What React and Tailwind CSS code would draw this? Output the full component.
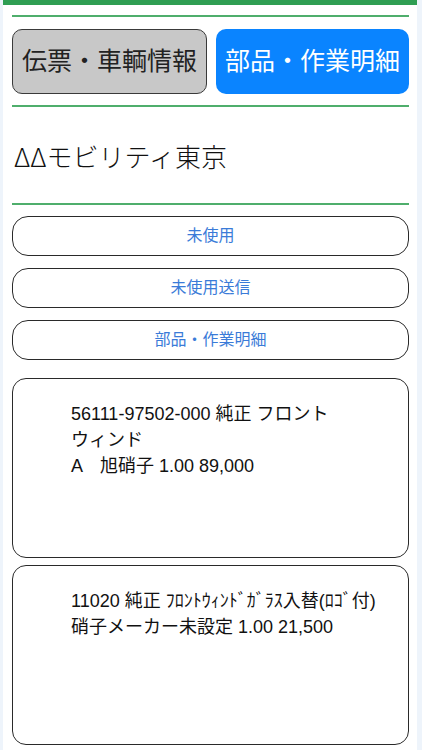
import React from 'react';

const font = { fontFamily: '"Liberation Sans", "Noto Sans CJK JP", sans-serif' };

const menuButtons = ['未使用', '未使用送信', '部品・作業明細'];

const items = [
  ['56111-97502-000 純正 フロント', 'ウィンド', 'A　旭硝子 1.00 89,000'],
  ['11020 純正 ﾌﾛﾝﾄｳｨﾝﾄﾞｶﾞﾗｽ入替(ﾛｺﾞ付)', '硝子メーカー未設定 1.00 21,500'],
];

const Divider = ({ className = '' }) => (
  <div className={`h-[2px] bg-[#4fae6c] ${className}`} />
);

export default function App() {
  return (
    <div className="w-full h-[750px] bg-[#eef4fb] overflow-hidden" style={font}>
      <div className="ml-[3px] mr-[5px] h-full bg-white">
        <div className="h-[5px] bg-[#2f9e53]" />
        <div className="pl-[9px] pr-[8px]">
          <Divider className="mt-[10px]" />

          <div className="mt-[12px] flex gap-[9px] h-[65px]">
            <button className="flex-1 rounded-[10px] border-[1.5px] border-[#3a3a3a] bg-[#c8c8c8] text-[25px] text-[#222] flex items-center justify-center">
              伝票・車輌情報
            </button>
            <button className="flex-1 rounded-[10px] bg-[#0a84ff] text-[25px] text-white flex items-center justify-center">
              部品・作業明細
            </button>
          </div>

          <Divider className="mt-[11px]" />

          <div className="h-[96px] flex items-center pl-[2px]">
            <h1
              className="text-[26px] text-[#111] font-light"
              style={{ fontFamily: '"Noto Sans CJK JP", sans-serif' }}
            >
              ΔΔモビリティ東京
            </h1>
          </div>

          <Divider />

          <div className="mt-[11px] flex flex-col gap-[12px]">
            {menuButtons.map((label) => (
              <button
                key={label}
                className="h-[40px] rounded-[16px] border-[1.5px] border-[#2a2a2a] bg-white text-[16px] text-[#3a7bd8] flex items-center justify-center"
              >
                {label}
              </button>
            ))}
          </div>

          <div className="mt-[18px] flex flex-col gap-[7px]">
            {items.map((lines, i) => (
              <div
                key={i}
                className="h-[180px] rounded-[14px] border-[1.5px] border-[#2a2a2a] pl-[58px] pt-[22px]"
              >
                {lines.map((line) => (
                  <p key={line} className="text-[18px] leading-[26px] text-[#111]">
                    {line}
                  </p>
                ))}
              </div>
            ))}
          </div>
        </div>
      </div>
    </div>
  );
}
